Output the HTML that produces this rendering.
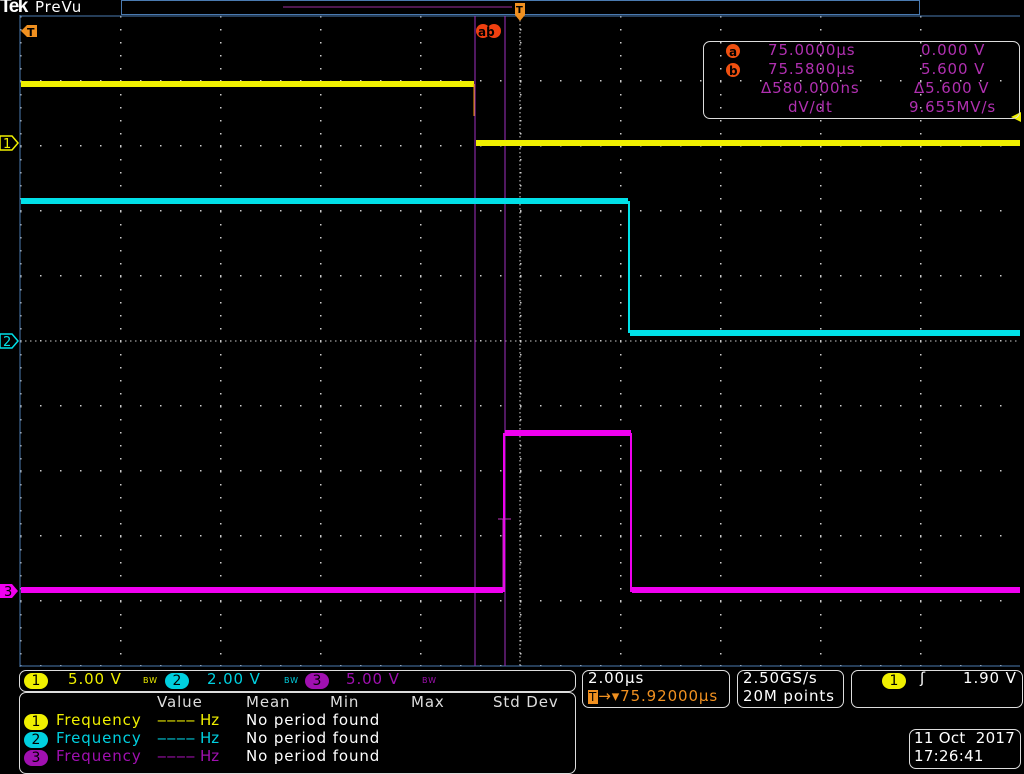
<!DOCTYPE html>
<html><head><style>
html,body{margin:0;padding:0;background:#000;width:1024px;height:768px;overflow:hidden;font-family:"DejaVu Sans","Liberation Sans",sans-serif;}
.t{position:absolute;font-size:15px;white-space:pre;letter-spacing:0.9px;}
.box{position:absolute;border:1px solid #ddd;border-radius:7px;}
.badge{display:inline-block;width:24px;height:16px;border-radius:8px;text-align:center;line-height:16px;color:#000;font-size:14px;letter-spacing:0;}
</style></head><body>
<svg width="1024" height="768" style="position:absolute;left:0;top:0">
<defs>
<pattern id="hd" x="20" y="0" width="20" height="65" patternUnits="userSpaceOnUse"><rect x="0" y="15" width="1.5" height="1.5" fill="#ccc"/></pattern>
<pattern id="vd" x="0" y="16" width="100" height="13" patternUnits="userSpaceOnUse"><rect x="20" y="0" width="1.5" height="1.5" fill="#ccc"/></pattern>
</defs>
<rect x="20" y="16" width="1000" height="650" fill="url(#hd)"/>
<rect x="20" y="16" width="1000" height="650" fill="url(#vd)"/>
<line x1="20" y1="341" x2="1020" y2="341" stroke="#ccc" stroke-dasharray="1.5 3.5"/>
<line x1="520" y1="16" x2="520" y2="666" stroke="#ddd" stroke-dasharray="1.5 2.5"/>
<line x1="20" y1="15" x2="20" y2="667" stroke="#4a7ab0"/>
<line x1="20" y1="666" x2="1020" y2="666" stroke="#4a7ab0"/>
<line x1="20" y1="16" x2="1020" y2="16" stroke="#4a7ab0"/>
<rect x="121.5" y="0.5" width="798" height="14" fill="none" stroke="#4a7ab0"/>
<line x1="283" y1="7" x2="512" y2="7" stroke="#a030a0"/>
<line x1="475" y1="16" x2="475" y2="666" stroke="#a030c0"/>
<line x1="505" y1="16" x2="505" y2="666" stroke="#a030c0"/>
<rect x="21" y="81" width="453" height="6" fill="#f0f000"/>
<line x1="474" y1="84" x2="474" y2="116" stroke="#f0a000"/>
<rect x="476" y="140" width="544" height="6" fill="#f0f000"/>
<rect x="21" y="198" width="607" height="6" fill="#00e0e8"/>
<line x1="629" y1="201" x2="629" y2="333" stroke="#00e0e8" stroke-width="2"/>
<rect x="630" y="330" width="390" height="6" fill="#00e0e8"/>
<rect x="21" y="587" width="482" height="6" fill="#f000f0"/>
<line x1="504" y1="433" x2="504" y2="592" stroke="#f000f0" stroke-width="2"/>
<rect x="505" y="430" width="126" height="6" fill="#f000f0"/>
<line x1="631" y1="433" x2="631" y2="592" stroke="#f000f0" stroke-width="2"/>
<rect x="632" y="587" width="388" height="6" fill="#f000f0"/>
<line x1="498" y1="519" x2="511" y2="519" stroke="#c030c0"/>
<line x1="503" y1="519" x2="503" y2="590" stroke="#c030c0"/>
<path d="M0 136 H12 L18 143 L12 150 H0 Z" fill="#000" stroke="#f0f000" stroke-width="1.5"/>
<text x="3" y="148" font-size="13" fill="#f0f000" font-family="DejaVu Sans">1</text>
<path d="M0 334 H12 L18 341 L12 348 H0 Z" fill="#000" stroke="#00e0e8" stroke-width="1.5"/>
<text x="3" y="346" font-size="13" fill="#00e0e8" font-family="DejaVu Sans">2</text>
<path d="M0 584 H12 L18 591 L12 598 H0 Z" fill="#f000f0"/>
<text x="4" y="596" font-size="13" fill="#000" font-family="DejaVu Sans">3</text>
<path d="M21 31 L27 25 H37 V37 H27 Z" fill="#f09020"/>
<text x="27" y="36" font-size="11" fill="#000" font-weight="bold">T</text>
<rect x="515" y="3" width="10" height="12" fill="#f09020"/>
<path d="M515 15 L525 15 L520 21 Z" fill="#f09020"/>
<text x="516" y="13" font-size="10" fill="#000" font-weight="bold">T</text>
<circle cx="483" cy="31" r="7" fill="#f04010"/><circle cx="494" cy="31" r="7" fill="#f04010"/>
<text x="478" y="36" font-size="12" fill="#000" font-weight="bold">ab</text>
<path d="M1021 112 L1011 117 L1021 122 Z" fill="#f0f000"/>
<circle cx="733" cy="51" r="7" fill="#f05010"/><text x="729" y="56" font-size="12" fill="#000" font-weight="bold">a</text>
<circle cx="733" cy="70" r="7" fill="#f05010"/><text x="729" y="75" font-size="12" fill="#000" font-weight="bold">b</text>
</svg>
<div class="t" style="left:0;top:-4px;font-size:19px;color:#fff;font-weight:bold;font-family:'Liberation Sans',sans-serif;letter-spacing:-1.5px">Tek</div>
<div class="t" style="left:35px;top:-2px;font-size:15px;color:#fff">PreVu</div>
<div class="box" style="left:703px;top:41px;width:315px;height:76px;"></div>
<div class="t" style="left:768px;top:41px;color:#b030b0">75.0000µs</div>
<div class="t" style="left:921px;top:41px;color:#b030b0">0.000 V</div>
<div class="t" style="left:768px;top:60px;color:#b030b0">75.5800µs</div>
<div class="t" style="left:921px;top:60px;color:#b030b0">5.600 V</div>
<div class="t" style="left:761px;top:79px;color:#b030b0">Δ580.000ns</div>
<div class="t" style="left:914px;top:79px;color:#b030b0">Δ5.600 V</div>
<div class="t" style="left:788px;top:98px;color:#b030b0">dV/dt</div>
<div class="t" style="left:909px;top:98px;color:#b030b0">9.655MV/s</div>
<div class="box" style="left:19px;top:670px;width:555px;height:20px;"></div>
<div class="t" style="left:24px;top:671px"><span class="badge" style="background:#f0f000">1</span></div>
<div class="t" style="left:68px;top:670px;color:#f0f000">5.00 V</div>
<div class="t" style="left:143px;top:676px;font-size:8px;color:#f0f000">BW</div>
<div class="t" style="left:165px;top:671px"><span class="badge" style="background:#00d0e0">2</span></div>
<div class="t" style="left:207px;top:670px;color:#00d0e0">2.00 V</div>
<div class="t" style="left:284px;top:676px;font-size:8px;color:#00d0e0">BW</div>
<div class="t" style="left:305px;top:671px"><span class="badge" style="background:#a010b0">3</span></div>
<div class="t" style="left:346px;top:670px;color:#a010b0">5.00 V</div>
<div class="t" style="left:422px;top:676px;font-size:8px;color:#a010b0">BW</div>
<div class="box" style="left:19px;top:692px;width:555px;height:80px;"></div>
<div class="t" style="left:157px;top:693px;color:#ddd">Value</div>
<div class="t" style="left:246px;top:693px;color:#ddd">Mean</div>
<div class="t" style="left:330px;top:693px;color:#ddd">Min</div>
<div class="t" style="left:411px;top:693px;color:#ddd">Max</div>
<div class="t" style="left:493px;top:693px;color:#ddd">Std Dev</div>
<div class="t" style="left:24px;top:712px"><span class="badge" style="background:#f0f000">1</span></div>
<div class="t" style="left:56px;top:711px;color:#f0f000">Frequency</div>
<div class="t" style="left:157px;top:711px;color:#f0f000;letter-spacing:0">‒‒‒‒ Hz</div>
<div class="t" style="left:246px;top:711px;color:#fff">No period found</div>
<div class="t" style="left:24px;top:730px"><span class="badge" style="background:#00d0e0">2</span></div>
<div class="t" style="left:56px;top:729px;color:#00d0e0">Frequency</div>
<div class="t" style="left:157px;top:729px;color:#00d0e0;letter-spacing:0">‒‒‒‒ Hz</div>
<div class="t" style="left:246px;top:729px;color:#fff">No period found</div>
<div class="t" style="left:24px;top:748px"><span class="badge" style="background:#a010b0">3</span></div>
<div class="t" style="left:56px;top:747px;color:#a010b0">Frequency</div>
<div class="t" style="left:157px;top:747px;color:#a010b0;letter-spacing:0">‒‒‒‒ Hz</div>
<div class="t" style="left:246px;top:747px;color:#fff">No period found</div>
<div class="box" style="left:582px;top:670px;width:146px;height:36px;"></div>
<div class="t" style="left:588px;top:669px;color:#fff">2.00µs</div>
<div class="t" style="left:588px;top:687px;color:#f09020"><span style="background:#f09020;color:#000;font-size:12px;padding:0 1px">T</span>→▾75.92000µs</div>
<div class="box" style="left:737px;top:670px;width:105px;height:36px;"></div>
<div class="t" style="left:743px;top:669px;color:#fff">2.50GS/s</div>
<div class="t" style="left:743px;top:687px;color:#fff">20M points</div>
<div class="box" style="left:851px;top:670px;width:170px;height:36px;"></div>
<div class="t" style="left:882px;top:671px"><span class="badge" style="background:#f0f000">1</span></div>
<div class="t" style="left:920px;top:669px;color:#fff">ʃ</div>
<div class="t" style="left:963px;top:669px;color:#fff">1.90 V</div>
<div class="box" style="left:909px;top:729px;width:110px;height:38px;"></div>
<div class="t" style="left:914px;top:729px;color:#fff;letter-spacing:0.3px">11 Oct  2017</div>
<div class="t" style="left:914px;top:747px;color:#fff;letter-spacing:0.3px">17:26:41</div>
</body></html>
